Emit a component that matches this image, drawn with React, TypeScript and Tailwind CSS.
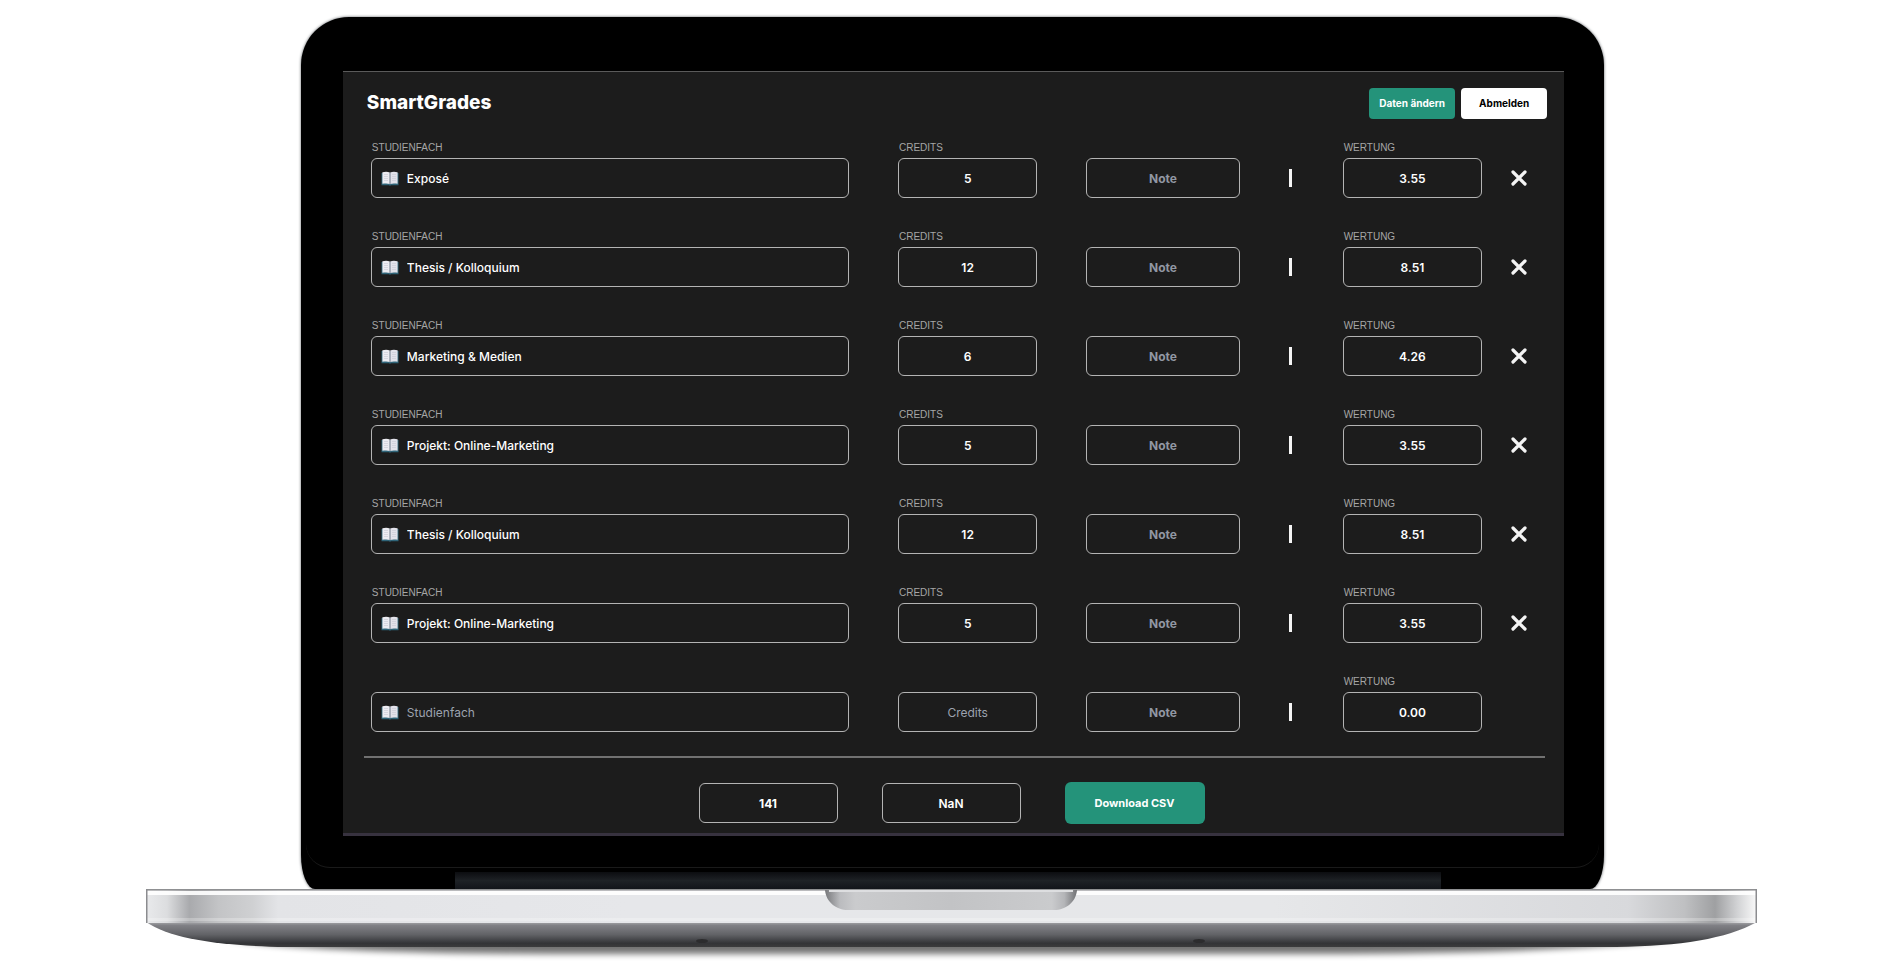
import { useState } from "react";

type Course = { id: number; subject: string; credits: string; score: string };

const initialCourses: Course[] = [
  { id: 1, subject: "Exposé", credits: "5", score: "3.55" },
  { id: 2, subject: "Thesis / Kolloquium", credits: "12", score: "8.51" },
  { id: 3, subject: "Marketing & Medien", credits: "6", score: "4.26" },
  { id: 4, subject: "Projekt: Online-Marketing", credits: "5", score: "3.55" },
  { id: 5, subject: "Thesis / Kolloquium", credits: "12", score: "8.51" },
  { id: 6, subject: "Projekt: Online-Marketing", credits: "5", score: "3.55" },
];

const field =
  "block h-10 w-full min-w-0 rounded-md border border-[#b4b4b4] bg-transparent text-[12px] text-white outline-none focus:border-[#24937a]";
const centered = "px-2 text-center";
const caption =
  "mb-0.5 block h-4 pl-px font-['Liberation_Sans',sans-serif] text-[10px] leading-4 text-[#a6a6a6] uppercase";

function BookIcon() {
  return (
    <svg viewBox="0 0 18 15" className="h-[15px] w-[18px] shrink-0" aria-hidden="true">
      <path d="M.5 2h17v12.2H10.2L9 14.8l-1.200-.6H.5z" fill="#2f6478" />
      <path d="M1.400 1.200C4 .5 7 .5 8.800 1.500v11.600C7 12.200 4 12.200 1.400 12.800z" fill="#ececf2" />
      <path d="M16.600 1.200C14 .5 11 .5 9.200 1.500v11.600c1.800-.9 4.800-.9 7.400-.3z" fill="#e2e2ea" />
      <path d="M9 1.500v11.800" stroke="#8f8f9b" strokeWidth=".9" />
      <path d="M3 3.500h4M3 5.500h4M3 7.500h4M3 9.500h4M11 3.500h4M11 5.500h4M11 7.500h4M11 9.500h4" stroke="#c9c9d4" strokeWidth=".6" />
    </svg>
  );
}

function CourseRow({ course, onRemove }: { course?: Course; onRemove?: () => void }) {
  const key = course ? String(course.id) : "new";
  return (
    <div className="grid grid-cols-[477fr_139fr_153fr_5px_192fr] items-end gap-[49px]">
      <div>
        {course && (
          <label htmlFor={`subject-${key}`} className={caption}>
            Studienfach
          </label>
        )}
        <div className="flex h-10 items-center gap-2 rounded-md border border-[#b4b4b4] pr-2 pl-[9px] focus-within:border-[#24937a]">
          <BookIcon />
          <input
            id={`subject-${key}`}
            aria-label="Studienfach"
            placeholder="Studienfach"
            defaultValue={course?.subject}
            className="h-full w-full min-w-0 bg-transparent text-[12px] font-medium text-white outline-none placeholder:font-normal placeholder:text-[#9ca3af]"
          />
        </div>
      </div>
      <div>
        {course && (
          <label htmlFor={`credits-${key}`} className={caption}>
            Credits
          </label>
        )}
        <input
          id={`credits-${key}`}
          aria-label="Credits"
          placeholder="Credits"
          defaultValue={course?.credits}
          className={`${field} ${centered} font-semibold placeholder:font-normal placeholder:text-[#9ca3af]`}
        />
      </div>
      <input
        aria-label="Note"
        placeholder="Note"
        className={`${field} ${centered} font-bold placeholder:font-bold placeholder:text-[#9197a3]`}
      />
      <div className="flex h-10 items-center">
        <span className="h-[18px] w-[3px] bg-[#f4f4f4]" />
      </div>
      <div className="grid grid-cols-[minmax(0,1fr)_32px] items-end gap-[21px]">
        <div>
          <label htmlFor={`score-${key}`} className={caption}>
            Wertung
          </label>
          <input
            id={`score-${key}`}
            readOnly
            value={course?.score ?? "0.00"}
            className={`${field} ${centered} font-semibold`}
          />
        </div>
        {onRemove && (
          <button
            type="button"
            aria-label="Entfernen"
            onClick={onRemove}
            className="flex h-10 w-8 items-center justify-center"
          >
            <svg viewBox="0 0 16 16" className="size-4" aria-hidden="true">
              <path d="M2 2l12 12M14 2L2 14" stroke="#f4f4f4" strokeWidth="3.200" strokeLinecap="round" />
            </svg>
          </button>
        )}
      </div>
    </div>
  );
}

function LaptopBase() {
  return (
    <svg viewBox="0 0 1611 80" preserveAspectRatio="none" className="block h-20 w-full" aria-hidden="true">
      <defs>
        <linearGradient id="metal" x1="0" x2="1" y1="0" y2="0">
          <stop offset="0" stopColor="#e9eaec" />
          <stop offset=".013" stopColor="#dcdddf" />
          <stop offset=".027" stopColor="#a9aaad" />
          <stop offset=".045" stopColor="#c3c4c6" />
          <stop offset=".066" stopColor="#cfd0d2" />
          <stop offset=".082" stopColor="#e3e4e7" />
          <stop offset=".3" stopColor="#e6e7ea" />
          <stop offset=".7" stopColor="#e6e7e9" />
          <stop offset=".92" stopColor="#d8d9dc" />
          <stop offset=".955" stopColor="#bfc0c2" />
          <stop offset=".974" stopColor="#9fa0a2" />
          <stop offset=".988" stopColor="#d2d3d5" />
          <stop offset="1" stopColor="#fafafa" />
        </linearGradient>
        <linearGradient id="edge" x1="0" x2="0" y1="0" y2="1">
          <stop offset="0" stopColor="#a6a7aa" />
          <stop offset=".14" stopColor="#808085" />
          <stop offset=".5" stopColor="#626367" />
          <stop offset=".85" stopColor="#333437" />
          <stop offset="1" stopColor="#3b3b3c" />
        </linearGradient>
        <linearGradient id="notch" x1="0" x2="1" y1="0" y2="0">
          <stop offset="0" stopColor="#77787b" />
          <stop offset=".06" stopColor="#bbbcbf" />
          <stop offset=".12" stopColor="#cacbcd" />
          <stop offset=".5" stopColor="#c2c3c5" />
          <stop offset=".9" stopColor="#cacbcd" />
          <stop offset=".95" stopColor="#b4b5b8" />
          <stop offset="1" stopColor="#707174" />
        </linearGradient>
        <filter id="soft" x="-5%" y="-100%" width="110%" height="300%">
          <feGaussianBlur stdDeviation="8 3" />
        </filter>
      </defs>
      <path d="M80 50H1530Q1420 64 1200 65H400Q160 64 80 50z" fill="#000" opacity=".55" filter="url(#soft)" />
      <path d="M0 33H1611C1580 50 1535 57 1470 58H140C75 57 25 50 0 33z" fill="url(#edge)" />
      <path d="M0 0H1611V34H0z" fill="url(#metal)" />
      <path d="M1 2H1610V6H1z" fill="#fff" opacity=".9" />
      <path d="M1 29H1610V32H1z" fill="#fff" opacity=".25" />
      <path d="M0 .75H1611" stroke="#8f9092" strokeWidth="1.500" />
      <path d="M.75 0V34M1610.250 0V34" stroke="#8b8c8f" strokeWidth="1.500" />
      <path d="M679 1H931C930 13 920 21 908 21H702C690 21 680 13 679 1z" fill="url(#notch)" />
      <path d="M683 2H927" stroke="#dddee0" strokeWidth="2" />
      <ellipse cx="556" cy="52" rx="6" ry="2" fill="#2c2c2e" />
      <ellipse cx="1053" cy="52" rx="6" ry="2" fill="#2c2c2e" />
    </svg>
  );
}

export default function App() {
  const [courses, setCourses] = useState(initialCourses);

  return (
    <main className="min-h-screen bg-white px-4 pt-[17px] font-[Inter,'Liberation_Sans',sans-serif]">
      <div className="mx-auto w-full max-w-[1611px]">
        <div className="pl-0.5">
          <div className="mx-auto w-[81%] rounded-t-[48px] rounded-br-[14px_34px] rounded-bl-[14px_34px] bg-black px-[5px] shadow-[0_0_3px_#55585c]">
            <div className="rounded-b-[24px] border-b border-[#1a1a1a] pt-[54px] pr-[35px] pb-[31px] pl-[37px]">
              <div className="border-t border-b-[3px] border-t-[#5a5a5a] border-b-[#37323f] bg-[#1c1c1c] pb-[9px]">
                <header className="flex items-start justify-between pt-4 pr-[17px] pl-6">
                  <h1 className="text-[19px] leading-[30px] font-extrabold text-white">SmartGrades</h1>
                  <div className="flex gap-[6px]">
                    <button
                      type="button"
                      className="h-[31px] w-[86px] rounded bg-[#24937a] text-[10px] font-bold whitespace-nowrap text-white"
                    >
                      Daten ändern
                    </button>
                    <button
                      type="button"
                      className="h-[31px] w-[86px] rounded bg-white text-[10px] font-bold whitespace-nowrap text-black"
                    >
                      Abmelden
                    </button>
                  </div>
                </header>

                <section className="mt-[21px] flex flex-col gap-[31px] pr-[29px] pl-7">
                  {courses.map((course) => (
                    <CourseRow
                      key={course.id}
                      course={course}
                      onRemove={() => setCourses(courses.filter((c) => c.id !== course.id))}
                    />
                  ))}
                  <CourseRow />
                </section>

                <hr className="mt-6 mr-[19px] ml-[21px] border-t-2 border-[#717171]" />

                <footer className="mt-6 flex items-center justify-center gap-11 pr-1">
                  <input
                    aria-label="Summe Credits"
                    readOnly
                    value="141"
                    className={`${field} ${centered} max-w-[139px] font-bold`}
                  />
                  <input
                    aria-label="Durchschnitt"
                    readOnly
                    value="NaN"
                    className={`${field} ${centered} max-w-[139px] font-semibold`}
                  />
                  <button
                    type="button"
                    className="h-[42px] w-[140px] rounded-md bg-[#24937a] text-[11px] font-bold whitespace-nowrap text-white"
                  >
                    Download CSV
                  </button>
                </footer>
              </div>
            </div>
            <div className="mt-1 ml-[11.5%] h-[17px] w-[76.3%] bg-linear-to-b from-[#0c0d10] via-[#1e2226] to-[#12151a]" />
          </div>
        </div>
        <LaptopBase />
      </div>
    </main>
  );
}
